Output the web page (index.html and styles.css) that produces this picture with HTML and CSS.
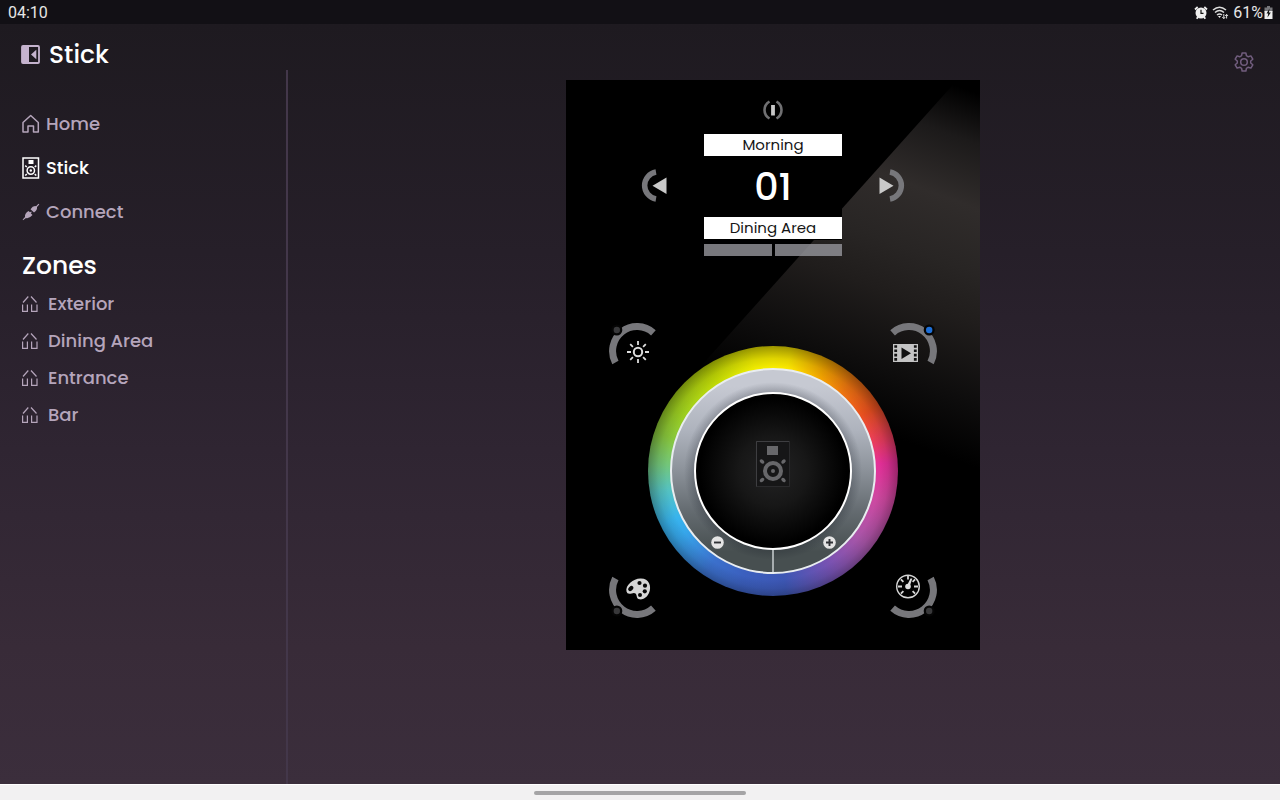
FILE: index.html
```html
<!DOCTYPE html>
<html lang="en">
<head>
<meta charset="utf-8">
<meta name="viewport" content="width=device-width, initial-scale=1">
<title>Stick</title>
<link rel="stylesheet" href="styles.css">
</head>
<body>
<svg width="0" height="0" class="defs" aria-hidden="true">
  <symbol id="zone" viewBox="0 0 16 18">
    <path d="M6.300 1.500 1 7.500M9 1.500 14.500 7.500M.6 9.500V16.300H5.400V9.500M15 9.500V16.300H9.600V9.500" fill="none" stroke="currentColor" stroke-width="1.200"/>
  </symbol>
  <symbol id="arc" viewBox="0 0 48 46">
    <path d="M7.400 40.500A24.500 24.500 0 0 1 45.400 10.800" fill="none" stroke="#77777b" stroke-width="7"/>
    <circle cx="8.800" cy="8" r="5.500" fill="#050505"/>
  </symbol>
</svg>

<div class="status">
  <span>04:10</span>
  <div class="status-icons">
    <svg width="14" height="14" viewBox="0 0 14 14" aria-hidden="true">
      <path d="M1 3.500 3.700 1M13 3.500 10.300 1M2.700 12.800 4 11M11.300 12.800 10 11" stroke="#eee" stroke-width="1.800" fill="none"/>
      <circle cx="7" cy="7" r="5.500" fill="#eee"/><path d="M7 3.800V7.300H9.500" stroke="#111" stroke-width="1.200" fill="none"/>
    </svg>
    <svg width="17" height="14" viewBox="0 0 17 14" aria-hidden="true">
      <path d="M1 4Q7.500-1.500 14 4M3 6.500Q7.500 2.600 12 6.500M5 9Q7.500 7 10 9" fill="none" stroke="#ddd" stroke-width="1.500"/>
      <path d="M6 10H9L7.500 12Z" fill="#eee"/><path d="M11.800 8V12.500M10.300 11l1.500 1.700 1.400-1.700M14.600 12.500V8.500M13.200 10l1.400-1.600L16 10" fill="none" stroke="#ddd"/>
    </svg>
    <span class="battery-text">61%</span>
    <svg width="9" height="14" viewBox="0 0 9 14" aria-hidden="true">
      <path d="M3 0H6V1.500H8.500V6H.5V1.500H3Z" fill="#77777b"/><path d="M.5 5H8.500V13H.5Z" fill="#eee"/><path d="M5.500 2.500 2.500 7.500H4.200L3.500 11.500 6.800 6.500H5Z" fill="#111"/>
    </svg>
  </div>
</div>

<div class="app">
  <aside class="sidebar">
    <header class="brand">
      <button class="plain" aria-label="Collapse menu">
        <svg width="19" height="19" viewBox="0 0 19 19"><rect x="1" y="1" width="17" height="17" rx="1" fill="none" stroke="#c5b3ce" stroke-width="1.800"/><path d="M1 1H8V18H1Z" fill="#c5b3ce"/><path d="M15.300 4.800V14.200L10 9.500Z" fill="#c5b3ce"/></svg>
      </button>
      <h1 class="title">Stick</h1>
    </header>
    <div class="menu">
      <nav class="nav" aria-label="Main">
        <a class="link" href="#home">
          <svg width="18" height="20" viewBox="0 0 18 20"><path d="M1 8.500 8.700 1.500 16.300 8.500V18H11.500V12H6V18H1Z" fill="none" stroke="currentColor" stroke-width="1.500" stroke-linejoin="round"/></svg>
          Home</a>
        <a class="link active" href="#stick" aria-current="page">
          <svg width="18" height="22" viewBox="0 0 18 22"><rect x="1" y="1" width="15.500" height="20" fill="none" stroke="currentColor" stroke-width="1.500"/><path d="M6.500 3H11.500V7H6.500Z" fill="currentColor"/><circle cx="8.800" cy="13.500" r="3.700" fill="none" stroke="currentColor" stroke-width="1.500"/><circle cx="8.800" cy="13.500" r="1.200" fill="currentColor"/><path d="M3.200 8.700l1.600 1.300M14.300 8.700l-1.600 1.300M3.200 18.500l1.600-1.400M14.300 18.500l-1.600-1.400" stroke="currentColor" stroke-width="1.500"/></svg>
          Stick</a>
        <a class="link" href="#connect">
          <svg width="18" height="18" viewBox="0 0 18 18" fill="currentColor"><path d="M1 17.200.7 16.500 3 14Q2.500 10.500 6.500 8L8 9.300 9.200 8.500 9.700 9.200 8.800 10.200 10.500 12Q7 16 4 15ZM8.500 6.300Q11 2.500 14 3.200L16.500.8 17.300 1.500 15 4Q15.500 7 12 9.500Z"/></svg>
          Connect</a>
      </nav>
      <h2 class="title zones-title">Zones</h2>
      <nav class="zones" aria-label="Zones">
        <a class="link" href="#exterior"><svg width="16" height="18"><use href="#zone"/></svg>Exterior</a>
        <a class="link" href="#dining"><svg width="16" height="18"><use href="#zone"/></svg>Dining Area</a>
        <a class="link" href="#entrance"><svg width="16" height="18"><use href="#zone"/></svg>Entrance</a>
        <a class="link" href="#bar"><svg width="16" height="18"><use href="#zone"/></svg>Bar</a>
      </nav>
    </div>
  </aside>

  <main class="main">
    <div class="toolbar">
      <button class="plain" aria-label="Settings">
        <svg width="20" height="20" viewBox="0 0 20 20" fill="none" stroke="#715d7e" stroke-width="1.500" stroke-linejoin="round"><path d="M8.100 1H11.900L12.400 3.700 14.300 4.800 16.900 3.900 18.800 7.200 16.700 9V11L18.800 12.800 16.900 16.100 14.300 15.200 12.400 16.300 11.900 19H8.100L7.600 16.300 5.700 15.200 3.100 16.100 1.200 12.800 3.300 11V9L1.200 7.200 3.100 3.900 5.700 4.800 7.600 3.700Z"/><circle cx="10" cy="10" r="3.300"/></svg>
      </button>
    </div>

    <section class="panel" aria-label="Stick controller">
      <button class="plain power" aria-label="Power">
        <svg width="20" height="20" viewBox="0 0 20 20" fill="none"><path d="M6.500 1.500Q1.500 4.500 1.500 10T6.500 18.500M13.500 1.500Q18.500 4.500 18.500 10T13.500 18.500" stroke="#707072" stroke-width="2.600"/><path d="M10 5V15.500" stroke="#c8c8c8" stroke-width="3.800"/></svg>
      </button>
      <div class="selector">
        <button class="plain arrow" aria-label="Previous scene">
          <svg width="26" height="33" viewBox="0 0 26 33"><path d="M15 3A13.700 13.700 0 0 0 15 30" fill="none" stroke="#77777b" stroke-width="5.500"/><path d="M25.500 8.500V25L11.500 16.700Z" fill="#c9c9c9"/></svg>
        </button>
        <div class="display">
          <div class="label">Morning</div>
          <div class="number">01</div>
          <div class="label">Dining Area</div>
          <div class="bars"><span></span><span></span></div>
        </div>
        <button class="plain arrow" aria-label="Next scene">
          <svg width="26" height="33" viewBox="0 0 26 33"><path d="M11 3A13.700 13.700 0 0 1 11 30" fill="none" stroke="#77777b" stroke-width="5.500"/><path d="M.5 8.500V25L14.500 16.700Z" fill="#c9c9c9"/></svg>
        </button>
      </div>

      <div class="controls">
        <button class="plain corner top left" aria-label="Brightness">
          <svg width="48" height="46" viewBox="0 0 48 46"><use href="#arc"/><circle cx="8.800" cy="8" r="3.200" fill="#38383a"/><circle cx="30" cy="30" r="4.200" fill="none" stroke="#ddd" stroke-width="2"/><path d="M30 19V23M30 37V41M19 30H23M37 30H41M22.200 22.200l2.700 2.700M35.100 35.100l2.700 2.700M22.200 37.800l2.700-2.700M35.100 24.900l2.700-2.700" stroke="#ddd" stroke-width="1.800"/></svg>
        </button>
        <button class="plain corner top right" aria-label="Scenes">
          <svg width="48" height="46" viewBox="0 0 48 46"><g transform="matrix(-1 0 0 1 48 0)"><use href="#arc"/></g><circle cx="39.200" cy="8" r="3.200" fill="#1d6fd8"/><path d="M3 22H28V40H3Z" fill="#c4c4c4"/><path d="M5.700 22V40M25.300 22V40" stroke="#111" stroke-width="2.800" stroke-dasharray="2.600 1.700" stroke-dashoffset="-1.200"/><path d="M11.500 25.500V37L21 31.200Z" fill="#111"/></svg>
        </button>
        <button class="plain corner bottom left" aria-label="Colors">
          <svg width="48" height="46" viewBox="0 0 48 46"><g transform="matrix(1 0 0 -1 0 46)"><use href="#arc"/></g><circle cx="8.800" cy="38" r="3.200" fill="#38383a"/><path d="M18.500 18.500C17 12 26 5 33 5.500C41 5.500 44 13.500 41 20C38.500 25 35 26.800 31.500 26.300C28 25.800 29.500 22.500 27.500 20.500C26 19 23.500 20.700 21.500 20.800Q19 20.900 18.500 18.500Z" fill="#d6d6d6"/><g fill="#080808"><ellipse cx="22.800" cy="15.500" rx="3" ry="2" transform="rotate(-45 22.800 15.500)"/><circle cx="31.500" cy="10" r="2.100"/><circle cx="37" cy="12.700" r="2.100"/><circle cx="36.800" cy="18.300" r="2.100"/><circle cx="32" cy="22" r="2"/></g></svg>
        </button>
        <button class="plain corner bottom right" aria-label="Speed">
          <svg width="48" height="46" viewBox="0 0 48 46"><g transform="matrix(-1 0 0 -1 48 46)"><use href="#arc"/></g><circle cx="39.200" cy="38" r="3.200" fill="#38383a"/><circle cx="18" cy="13.500" r="11.300" fill="none" stroke="#d6d6d6" stroke-width="1.400"/><path d="M18 3V6.500M8 13.500H12M24 13.500H28M10.900 6.400l2.500 2.500M25.100 6.400l-2.500 2.500M10.900 20.600l2.500-2.500M25.100 20.600l-2.500-2.500" stroke="#d6d6d6" stroke-width="1.800"/><circle cx="18" cy="13.500" r="2.800" fill="#ddd"/><path d="M16.800 13 20.500 5.500H22.300L19.500 14Z" fill="#ddd"/></svg>
        </button>

        <div class="wheel">
          <div class="ring">
            <button class="plain hub" aria-label="Stick">
              <svg width="34" height="46" viewBox="0 0 34 46"><rect x=".5" y=".5" width="33" height="45" fill="#161617" stroke="#2a2a2c"/><path d="M.5 45.500V.500H33" fill="none" stroke="#3e3e41"/><g fill="#67676a"><path d="M11 5H22V14H11Z"/><circle cx="17" cy="30" r="2"/><ellipse cx="6" cy="20.500" rx="2.600" ry="1.800" transform="rotate(45 6 20.500)"/><ellipse cx="27.500" cy="20.500" rx="2.600" ry="1.800" transform="rotate(-45 27.500 20.500)"/><ellipse cx="6" cy="39" rx="2.600" ry="1.800" transform="rotate(-45 6 39)"/><ellipse cx="27.500" cy="39" rx="2.600" ry="1.800" transform="rotate(45 27.500 39)"/></g><circle cx="17" cy="30" r="8" fill="none" stroke="#67676a" stroke-width="4"/></svg>
            </button>
            <div class="dim">
              <button class="plain" aria-label="Decrease"><svg width="13" height="13" viewBox="0 0 13 13"><circle cx="6.500" cy="6.500" r="6.300" fill="#e4e4e4"/><path d="M3 6.500H10" stroke="#303236" stroke-width="1.900"/></svg></button>
              <button class="plain" aria-label="Increase"><svg width="13" height="13" viewBox="0 0 13 13"><circle cx="6.500" cy="6.500" r="6.300" fill="#e4e4e4"/><path d="M3 6.500H10M6.500 3V10" stroke="#303236" stroke-width="1.900"/></svg></button>
            </div>
          </div>
        </div>
      </div>
    </section>
  </main>
</div>
<div class="gesture"><span></span></div>
</body>
</html>
```
FILE: styles.css
```css
* {
  box-sizing: border-box;
}

body {
  margin: 0;
  min-height: 100vh;
  display: flex;
  flex-direction: column;
  background: #1e1a20;
  font-family: Poppins, Inter, "Liberation Sans", sans-serif;
  font-weight: 500;
  color: #fff;
}

svg {
  display: block;
  flex: none;
}

.defs {
  position: absolute;
}

.plain {
  display: block;
  padding: 0;
  border: 0;
  background: none;
  color: inherit;
  cursor: pointer;
}

.status {
  height: 24px;
  padding: 2px 7px 0 8px;
  display: flex;
  align-items: center;
  justify-content: space-between;
  background: #121015;
  font: 400 16px/22px Roboto, sans-serif;
  color: #e6e6e6;
}

.status-icons {
  display: flex;
  align-items: center;
  gap: 4px;
}

.battery-text {
  margin-right: -3px;
}

.app {
  flex: 1;
  display: flex;
  background: linear-gradient(#1e1a20, #261f29 30%, #2f2532 56%, #382b38 82%, #3b2e3c);
}

.sidebar {
  flex: none;
  width: 288px;
  display: flex;
  flex-direction: column;
}

.brand {
  height: 46px;
  padding: 15px 21px 0;
  display: flex;
  align-items: center;
  gap: 9px;
}

.title {
  margin: 0;
  font-size: 25px;
  line-height: 35px;
  font-weight: 500;
}

.menu {
  flex: 1;
  padding: 32px 20px 0 22px;
  border-right: 2px solid #43374a;
}

.nav,
.zones {
  display: flex;
  flex-direction: column;
}

.link {
  display: flex;
  align-items: center;
  height: 44px;
  gap: 6px;
  font-size: 18px;
  line-height: 26px;
  color: #b5a5bb;
  text-decoration: none;
}

.link.active {
  color: #fff;
}

.zones-title {
  margin: 14px 0 2px;
}

.zones .link {
  height: 37px;
  gap: 10px;
}

.main {
  flex: 1;
  padding: 28px 22px 28px 0;
  display: flex;
  flex-direction: column;
  align-items: center;
}

.toolbar {
  align-self: stretch;
  padding: 0 4px 8px;
  display: flex;
  justify-content: flex-end;
}

.panel {
  position: relative;
  isolation: isolate;
  width: 414px;
  max-width: 100%;
  padding: 20px 42px 31px;
  display: flex;
  flex-direction: column;
  background: #000;
}

.panel::before {
  content: "";
  position: absolute;
  inset: 0;
  z-index: -1;
  clip-path: polygon(94.500% 0, 100% 0, 100% 75%, 31% 75%, 31% 51.500%);
  background: linear-gradient(200deg, #000 2%, #1c1a1a 9%, #302c2b 18%, #282524 27%, #201d1c 34%, #0e0d0d 45%, #000 54%);
}

.power {
  align-self: center;
}

.selector {
  margin: 14px 33px 66px;
  display: flex;
  justify-content: space-between;
  align-items: flex-start;
}

.arrow {
  margin-top: 35px;
}

.display {
  width: 138px;
  background: linear-gradient(#000, #000) top / 100% 106px no-repeat;
}

.label {
  height: 22px;
  background: #fff;
  color: #161616;
  font-size: 15px;
  line-height: 22px;
  font-weight: 400;
  text-align: center;
}

.number {
  font-size: 38px;
  line-height: 61px;
  text-align: center;
}

.bars {
  margin-top: 5px;
  display: flex;
  gap: 3px;
}

.bars span {
  flex: 1;
  height: 12px;
  background: rgba(150, 150, 156, 0.8);
}

.controls {
  display: grid;
  grid-template: 1fr 1fr / 1fr 1fr;
  min-height: 297px;
}

.corner.top {
  grid-row: 1;
  align-self: start;
}

.corner.bottom {
  grid-row: 2;
  align-self: end;
}

.corner.left {
  grid-column: 1;
  justify-self: start;
}

.corner.right {
  grid-column: 2;
  justify-self: end;
}

.wheel {
  grid-area: 1 / 1 / 3 / 3;
  place-self: center;
  padding: 22px;
  border-radius: 50%;
  background:
    radial-gradient(circle at 50% 51%, transparent 106px, rgba(0, 0, 0, 0.1) 115px, rgba(0, 0, 0, 0.36) 127px),
    conic-gradient(#f8ec00, #fbe800 8deg, #f3a400 27deg, #ed7410 42deg, #e9501f 58deg, #e83c5c 74deg, #e42f98 86deg, #cf48a0 104deg, #a855a8 128deg, #7552b2 150deg, #3d57b4 174deg, #3b5fbe 195deg, #3b70cc 213deg, #36a6ea 235deg, #38b4ee 244deg, #55c2c0 260deg, #72c67c 273deg, #88c63c 288deg, #9bcd20 302deg, #c2da05 328deg, #f0ec00 350deg, #f8ec00);
}

.ring {
  width: 206px;
  height: 206px;
  display: grid;
  border: 2px solid #e9edf0;
  border-radius: 50%;
  background:
    linear-gradient(#a7adaf, #a7adaf) bottom / 2px 24px no-repeat,
    radial-gradient(closest-side, rgba(20, 25, 35, 0.26) 77%, transparent 88%),
    linear-gradient(#c6c9d2 8%, #aeb3bd 30%, #8f959d 48%, #646b70 70%, #474f50 90%);
}

.hub,
.dim {
  grid-area: 1 / 1;
}

.hub {
  place-self: center;
  width: 158px;
  height: 158px;
  padding-bottom: 14px;
  display: grid;
  place-items: center;
  border: 2px solid #fff;
  border-radius: 50%;
  background: radial-gradient(closest-side, #232324, #171717 45%, #000 95%);
}

.dim {
  align-self: end;
  display: flex;
  justify-content: space-between;
  padding: 0 38px 23px 39px;
}

.gesture {
  height: 16px;
  display: flex;
  align-items: center;
  justify-content: center;
  border-top: 1px solid #fff;
  background: #f2f1f2;
}

.gesture span {
  width: 212px;
  height: 4px;
  border-radius: 2px;
  background: #a5a4a6;
}
```
